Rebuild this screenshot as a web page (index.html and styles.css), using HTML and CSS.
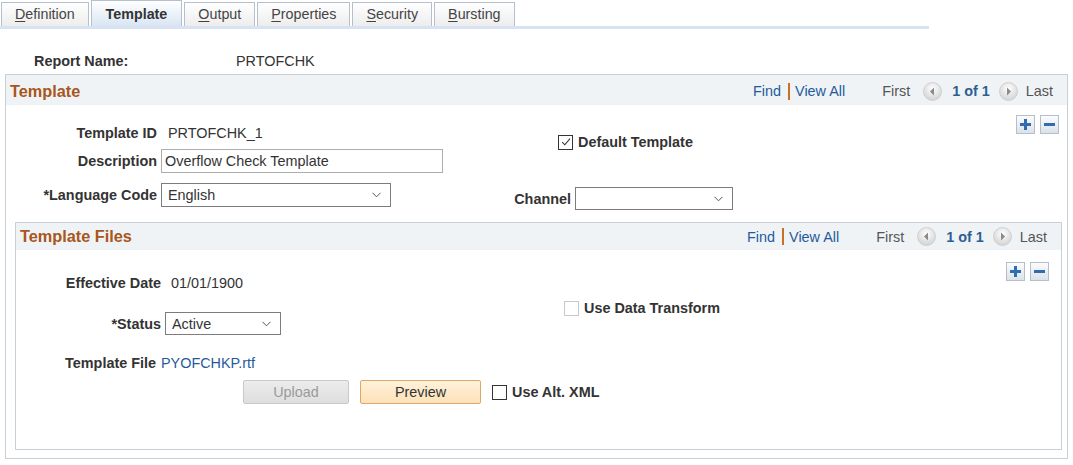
FILE: index.html
```html
<!DOCTYPE html>
<html lang="en">
<head>
<meta charset="utf-8">
<title>Template</title>
<link rel="stylesheet" href="styles.css">
</head>
<body>
<div class="tabbar">
  <div class="tab"><u>D</u>efinition</div>
  <div class="tab active">Template</div>
  <div class="tab"><u>O</u>utput</div>
  <div class="tab"><u>P</u>roperties</div>
  <div class="tab"><u>S</u>ecurity</div>
  <div class="tab"><u>B</u>ursting</div>
</div>

<div class="report-row"><span class="report-lbl">Report Name:</span><span class="report-val">PRTOFCHK</span></div>

<section class="grp outer">
  <header class="grp-hd outer-hd">
    <h2>Template</h2>
    <div class="snav">
      <span class="link">Find</span><span class="sep"></span><span class="link viewall">View All</span>
      <span class="muted">First</span>
      <svg class="navbtn first-btn" width="19" height="19" viewBox="0 0 19 19"><defs><radialGradient id="g1" cx="50%" cy="35%" r="65%"><stop offset="0" stop-color="#ffffff"/><stop offset="1" stop-color="#d2d2d2"/></radialGradient></defs><circle cx="9.5" cy="9.5" r="9" fill="url(#g1)" stroke="#d0d0d0"/><path d="M11 5.5 L7 9.5 L11 13.5 Z" fill="#8a8a8a"/></svg>
      <span class="count">1 of 1</span>
      <svg class="navbtn next-btn" width="19" height="19" viewBox="0 0 19 19"><circle cx="9.5" cy="9.5" r="9" fill="url(#g1)" stroke="#d0d0d0"/><path d="M8 5.5 L12 9.5 L8 13.5 Z" fill="#8a8a8a"/></svg>
      <span class="muted">Last</span>
    </div>
  </header>
  <div class="grp-body top-body">
    <div class="col-left">
      <div class="frow h18 mb7"><span class="flabel w151">Template ID</span><span class="dval">PRTOFCHK_1</span></div>
      <div class="frow h24 mb10"><span class="flabel w151">Description</span><div class="textbox desc">Overflow Check Template</div></div>
      <div class="frow h24"><span class="flabel w151">*Language Code</span><div class="dropdown lang"><span>English</span><svg class="chev" width="9" height="6" viewBox="0 0 9 6"><path d="M0.5 0.8 L4.5 4.8 L8.5 0.8" fill="none" stroke="#555" stroke-width="1"/></svg></div></div>
    </div>
    <div class="col-right">
      <div class="frow h18 deftpl"><span class="cbox checked"><svg width="12" height="12" viewBox="0 0 12 12"><path d="M2.2 6.2 L4.8 8.8 L10 2.6" fill="none" stroke="#333" stroke-width="1.1"/></svg></span><span class="cb-label">Default Template</span></div>
      <div class="frow h23 chanrow"><span class="flabel w71">Channel</span><div class="dropdown chan"><span></span><svg class="chev" width="9" height="6" viewBox="0 0 9 6"><path d="M0.5 0.8 L4.5 4.8 L8.5 0.8" fill="none" stroke="#555" stroke-width="1"/></svg></div></div>
    </div>
    <div class="row-actions">
      <span class="rbtn"><svg width="13" height="13" viewBox="0 0 13 13"><path d="M6.5 1 V12 M1 6.5 H12" stroke="#2f6cb0" stroke-width="3"/></svg></span>
      <span class="rbtn"><svg width="13" height="13" viewBox="0 0 13 13"><path d="M1 6.5 H12" stroke="#2f6cb0" stroke-width="3"/></svg></span>
    </div>
  </div>

  <section class="grp inner">
    <header class="grp-hd inner-hd">
      <h2>Template Files</h2>
      <div class="snav">
        <span class="link">Find</span><span class="sep"></span><span class="link viewall">View All</span>
        <span class="muted">First</span>
        <svg class="navbtn first-btn" width="19" height="19" viewBox="0 0 19 19"><circle cx="9.5" cy="9.5" r="9" fill="url(#g1)" stroke="#d0d0d0"/><path d="M11 5.5 L7 9.5 L11 13.5 Z" fill="#8a8a8a"/></svg>
        <span class="count">1 of 1</span>
        <svg class="navbtn next-btn" width="19" height="19" viewBox="0 0 19 19"><circle cx="9.5" cy="9.5" r="9" fill="url(#g1)" stroke="#d0d0d0"/><path d="M8 5.5 L12 9.5 L8 13.5 Z" fill="#8a8a8a"/></svg>
        <span class="muted">Last</span>
      </div>
    </header>
    <div class="grp-body files-body">
      <div class="fcol-left">
        <div class="frow h18"><span class="flabel w145">Effective Date</span><span class="dval2">01/01/1900</span></div>
        <div class="frow h23 mt20"><span class="flabel w145">*Status</span><div class="dropdown status"><span>Active</span><svg class="chev" width="9" height="6" viewBox="0 0 9 6"><path d="M0.5 0.8 L4.5 4.8 L8.5 0.8" fill="none" stroke="#555" stroke-width="1"/></svg></div></div>
        <div class="frow h18 mt19"><span class="flabel w140">Template File</span><span class="link filelink">PYOFCHKP.rtf</span></div>
        <div class="frow h24 mt8 btnrow">
          <span class="btn disabled">Upload</span>
          <span class="btn primary">Preview</span>
          <span class="cbox altxml"></span><span class="cb-label">Use Alt. XML</span>
        </div>
      </div>
      <div class="fcol-right">
        <div class="frow h18"><span class="cbox disabled-cb"></span><span class="cb-label">Use Data Transform</span></div>
      </div>
      <div class="row-actions inner-actions">
        <span class="rbtn"><svg width="13" height="13" viewBox="0 0 13 13"><path d="M6.5 1 V12 M1 6.5 H12" stroke="#2f6cb0" stroke-width="3"/></svg></span>
        <span class="rbtn"><svg width="13" height="13" viewBox="0 0 13 13"><path d="M1 6.5 H12" stroke="#2f6cb0" stroke-width="3"/></svg></span>
      </div>
    </div>
  </section>
</section>
</body>
</html>
```

FILE: styles.css
```css
* { box-sizing: border-box; }

body {
  margin: 0;
  font-family: "Liberation Sans", Arial, sans-serif;
  font-size: 14.4px;
  color: #333;
  background: #fff;
}

/* Tabs */
.tabbar {
  display: flex;
  align-items: flex-end;
  gap: 2px;
  width: 929px;
  height: 29px;
  padding-left: 1px;
  border-bottom: 3px solid #d7e3f2;
}
.tab {
  height: 24px;
  padding: 0 13px;
  border: 1px solid #b5bfcd;
  border-bottom: 0;
  background: linear-gradient(#ffffff, #ededed);
  font-size: 14.3px;
  line-height: 23px;
  color: #444;
  white-space: nowrap;
}
.tab u { text-decoration-thickness: 1px; text-underline-offset: 2px; }
.tab.active {
  height: 26px;
  padding: 0 14px;
  font-weight: bold;
  color: #333;
  line-height: 26px;
  background: linear-gradient(#ffffff, #d9e5f4);
}

/* Report name */
.report-row {
  display: flex;
  height: 18px;
  line-height: 18px;
  margin-top: 23px;
  padding-left: 34px;
}
.report-lbl { width: 202px; font-weight: bold; color: #333; }
.report-val { color: #333; }

/* Group boxes */
.grp {
  border: 1px solid #c9cfd6;
  background: #fff;
}
.outer {
  width: 1063px;
  margin: 4px 0 0 5px;
}
.inner {
  margin: 0 5px 8px 9px;
}
.grp-hd {
  display: flex;
  align-items: center;
  height: 27px;
  padding: 0 14px 0 4px;
  background: #f0f3f5;
}
.outer-hd { height: 30px; padding-top: 2px; }
.inner-hd { height: 27px; }
.grp-hd h2 {
  margin: 0;
  font-size: 16.3px;
  font-weight: bold;
  color: #a8561c;
}

.snav {
  display: flex;
  align-items: center;
  margin-left: auto;
  white-space: nowrap;
}
.link { color: #1f5b9c; }
.sep {
  display: inline-block;
  width: 2px;
  height: 17px;
  background: #c6702a;
  margin: 0 5px 0 7px;
}
.viewall { margin-right: 37px; }
.muted { color: #555; }
.navbtn { display: block; flex: none; }
.first-btn { margin: 0 10px 0 13px; }
.next-btn { margin: 0 8px 0 9px; }
.count { font-weight: bold; color: #2d5e93; }

/* Bodies */
.grp-body {
  display: flex;
  align-items: flex-start;
}
.top-body { padding: 10px 8px 12px 0; }
.col-left { width: 494px; margin-top: 9px; }
.col-right { width: 240px; margin-top: 18px; }

.frow {
  display: flex;
  align-items: center;
  white-space: nowrap;
}
.frow > * { flex: none; }
.h18 { height: 18px; }
.h23 { height: 23px; }
.h24 { height: 24px; }
.mb7 { margin-bottom: 7px; }
.mb10 { margin-bottom: 10px; }
.mt20 { margin-top: 20px; }
.mt19 { margin-top: 19px; }
.mt8 { margin-top: 8px; }

.flabel {
  text-align: right;
  font-weight: bold;
  color: #333;
}
.w151 { width: 151px; margin-right: 4px; }
.w145 { width: 145px; margin-right: 4px; }
.w140 { width: 140px; margin-right: 5px; }
.w71 { width: 71px; margin-right: 4px; }

.dval { margin-left: 7px; color: #333; }
.dval2 { margin-left: 6px; color: #333; }

.textbox {
  height: 24px;
  border: 1px solid #adadad;
  padding: 0 3px;
  line-height: 22px;
  color: #333;
}
.desc { width: 282px; }

.dropdown {
  display: flex;
  align-items: center;
  justify-content: space-between;
  height: 24px;
  border: 1px solid #7c7c7c;
  padding: 0 9px 0 6px;
  background: #fff;
  color: #333;
}
.lang { width: 230px; }
.chan { width: 158px; height: 23px; }
.status { width: 116px; height: 23px; }
.chev { display: block; }

.deftpl { padding-left: 58px; }
.chanrow { margin-top: 36px; margin-left: 13px; }
.chanrow .w71 { width: 58px; }

.cbox {
  display: flex;
  align-items: center;
  justify-content: center;
  width: 15px;
  height: 15px;
  border: 1px solid #333;
  background: #fff;
}
.cb-label {
  margin-left: 5px;
  font-weight: bold;
  color: #333;
}

.row-actions {
  display: flex;
  gap: 5px;
  margin-left: auto;
}
.rbtn {
  display: flex;
  align-items: center;
  justify-content: center;
  width: 19px;
  height: 19px;
  border: 1px solid #b4bfcb;
  background: linear-gradient(#fbfcfd, #dce2e9);
}

/* Files */
.files-body { padding: 12px 12px 45px 0; }
.fcol-left { width: 548px; margin-top: 12px; }
.fcol-right { margin-top: 37px; }

.filelink { color: #1f5b9c; }

.btnrow { padding-left: 227px; }
.btn {
  display: flex;
  align-items: center;
  justify-content: center;
  height: 24px;
  border-radius: 2px;
  font-size: 14.4px;
}
.btn.disabled {
  width: 106px;
  border: 1px solid #c9c9c9;
  background: linear-gradient(#ececec, #dedede);
  color: #9a9a9a;
}
.btn.primary {
  width: 121px;
  margin-left: 11px;
  border: 1px solid #dfa868;
  background: linear-gradient(#fff1da, #fce2b8);
  color: #333;
}
.altxml { margin-left: 11px; }
.disabled-cb { border-color: #c9c9c9; }
```
